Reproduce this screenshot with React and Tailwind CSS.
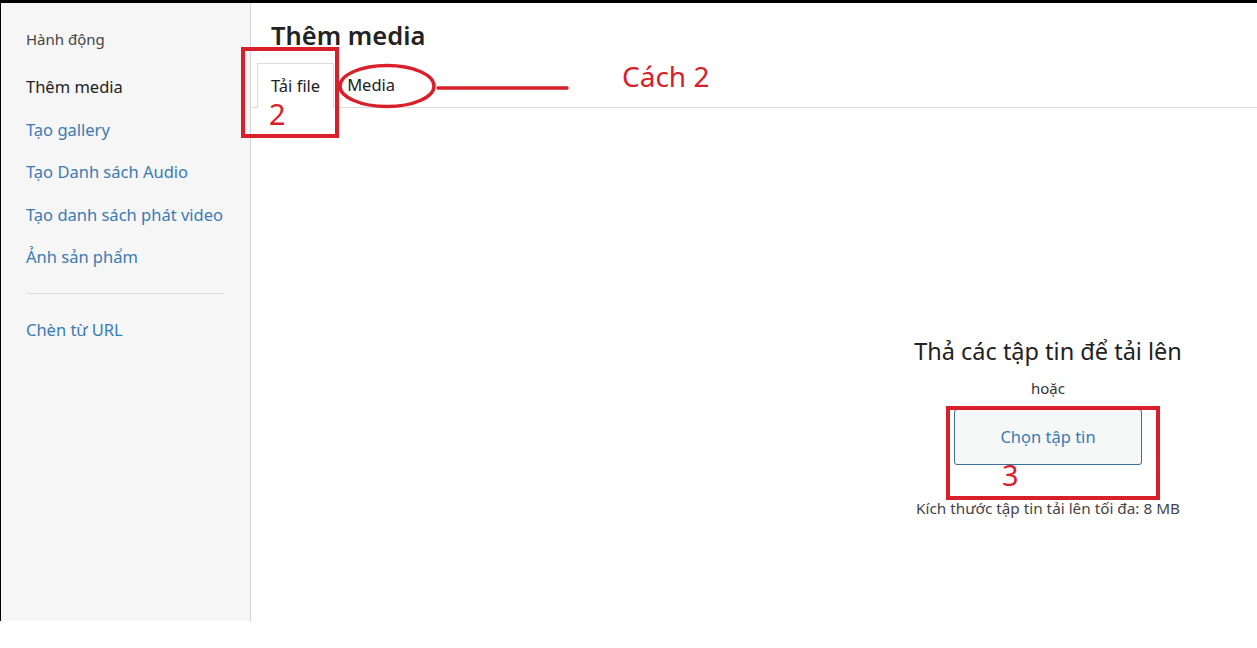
import React from "react";

const items = [
  { t: "Thêm media", active: true },
  { t: "Tạo gallery" },
  { t: "Tạo Danh sách Audio" },
  { t: "Tạo danh sách phát video" },
  { t: "Ảnh sản phẩm" },
];

export default function App() {
  return (
    <div className="relative w-[1257px] h-[648px] bg-white overflow-hidden" style={{ fontFamily: '"Noto Sans", "Open Sans", sans-serif' }}>
      <div className="h-[3px] bg-black" />
      <div className="flex h-[618px]">
        <aside className="w-[251px] shrink-0 bg-[#f6f6f6] border-l border-black border-r border-r-[#d4d4d4] pl-[25px] pr-[26px] pt-[26px]">
          <div className="text-[15px] text-[#444] h-[20px] leading-[20px]">Hành động</div>
          <ul className="mt-[27px] flex flex-col gap-[20.5px]">
            {items.map((i) => (
              <li key={i.t} className={`text-[16.5px] leading-[22px] ${i.active ? "text-[#222]" : "text-[#3b7bb3]"}`}>{i.t}</li>
            ))}
          </ul>
          <div className="mt-[25px] border-t border-[#dcdcdc]" />
          <div className="mt-[25px] text-[16.5px] leading-[22px] text-[#3b7bb3]">Chèn từ URL</div>
        </aside>
        <main className="flex-1 flex flex-col">
          <h1 className="ml-[20px] mt-[17px] text-[25.5px] leading-[30px] font-semibold text-[#222]">Thêm media</h1>
          <div className="mt-[14px] flex items-end border-b border-[#dcdcdc] pl-[6px] h-[44px]">
            <div className="h-[45px] -mb-px px-[13px] border border-b-0 border-[#dcdcdc] bg-white flex items-center text-[16.5px] text-[#222]">Tải file</div>
            <div className="h-[44px] px-[13px] flex items-center text-[16.5px] text-[#222]">Media</div>
          </div>
          <div className="ml-[597px] w-[400px] mt-[228px] flex flex-col items-center text-[#222]">
            <div className="text-[23.5px] leading-[30px]">Thả các tập tin để tải lên</div>
            <div className="mt-[12px] text-[15px] leading-[20px] text-[#333]">hoặc</div>
            <button className="mt-[11px] w-[188px] h-[56px] rounded-[3px] border border-[#3b6f9c] bg-[#f6f7f7] text-[16.5px] text-[#3b7bb3]">Chọn tập tin</button>
            <div className="mt-[33px] text-[15.3px] leading-[20px] text-[#444]">Kích thước tập tin tải lên tối đa: 8 MB</div>
          </div>
        </main>
      </div>

      {/* annotations */}
      <div className="absolute left-[241px] top-[47px] w-[98px] h-[91px] border-[4px] border-[#d9202a]" />
      <div className="absolute left-[269px] top-[96px] text-[29px] leading-[36px] text-[#d9202a]">2</div>
      <svg className="absolute left-0 top-0" width="1257" height="648">
        <ellipse cx="387" cy="86" rx="47" ry="20.5" fill="none" stroke="#d9202a" strokeWidth="3.5" />
        <line x1="438" y1="88" x2="567" y2="88" stroke="#d9202a" strokeWidth="3.5" strokeLinecap="round" />
      </svg>
      <div className="absolute left-[622px] top-[57px] text-[28px] leading-[38px] text-[#d9202a]">Cách 2</div>
      <div className="absolute left-[946px] top-[406px] w-[214px] h-[94px] border-[4px] border-[#d9202a]" />
      <div className="absolute left-[1002px] top-[457px] text-[29px] leading-[36px] text-[#d9202a]">3</div>
    </div>
  );
}
